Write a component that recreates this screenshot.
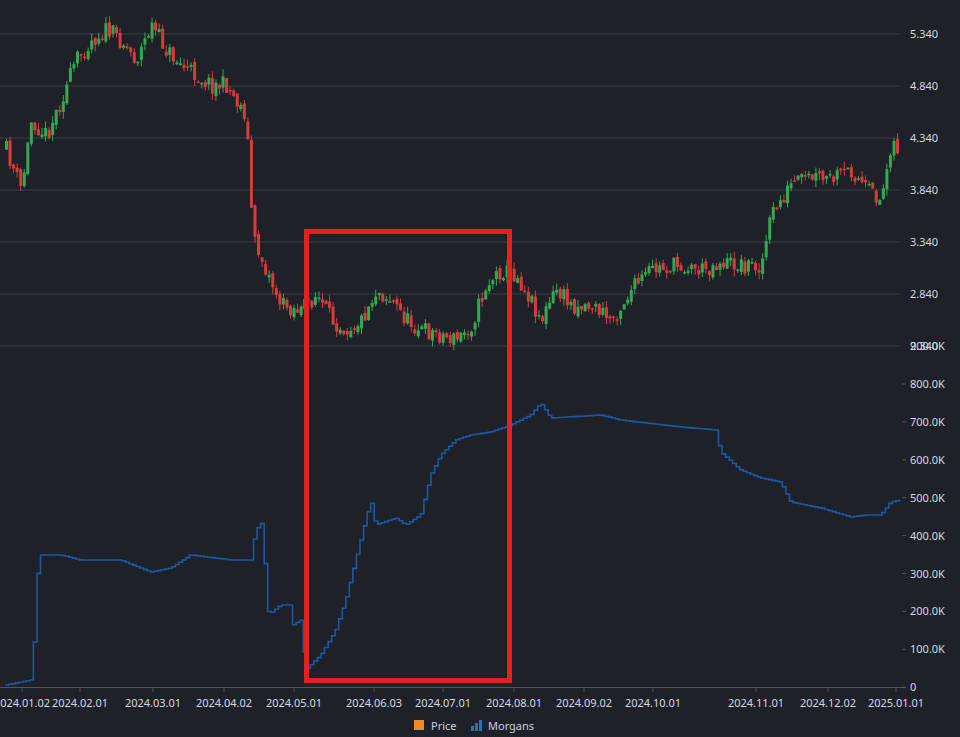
import React from "react";

const pricePts: [number, number][] = [[5,150],[20,190],[30,120],[45,135],[60,100],[75,60],[90,40],[105,30],[120,40],[135,60],[150,25],[165,50],[180,65],[195,75],[210,85],[225,85],[245,115],[248,175],[252,240],[265,270],[280,305],[300,310],[315,295],[330,320],[345,328],[360,320],[375,290],[390,300],[405,320],[420,330],[440,335],[455,340],[470,325],[485,285],[500,270],[515,275],[530,300],[540,320],[555,290],[570,305],[590,305],[610,320],[630,290],[650,270],[680,265],[700,270],[720,262],[740,265],[760,265],[770,215],[790,185],[810,178],[830,180],[850,170],[865,190],[880,200],[890,140],[897,150]];

const volPts: [number, number][] = [[5,685],[30,680],[33,650],[36,590],[38,555],[60,555],[80,560],[120,560],[150,572],[170,568],[190,555],[230,560],[250,560],[255,530],[262,522],[265,580],[268,615],[280,605],[290,605],[292,625],[300,620],[305,670],[320,655],[335,630],[345,600],[355,560],[365,520],[370,500],[375,525],[395,518],[405,525],[420,515],[430,475],[440,455],[455,440],[470,435],[490,432],[510,425],[530,415],[540,403],[550,418],[600,415],[620,420],[680,427],[715,430],[720,452],[740,470],[760,478],[780,482],[790,502],[820,508],[850,517],[865,515],[880,515],[890,502],[900,500]];

function interp(pts: [number, number][], x: number) {
  for (let i = 0; i < pts.length - 1; i++) {
    const [x0, y0] = pts[i], [x1, y1] = pts[i + 1];
    if (x >= x0 && x <= x1) return y0 + ((y1 - y0) * (x - x0)) / (x1 - x0 || 1);
  }
  return pts[pts.length - 1][1];
}

let seed = 11;
function rnd() { seed = (seed * 16807) % 2147483647; return seed / 2147483647; }

const candles: { x: number; o: number; c: number; h: number; l: number }[] = [];
let prev = interp(pricePts, 5);
for (let x = 5; x <= 897; x += 3.55) {
  const target = interp(pricePts, x) + (rnd() - 0.5) * 18;
  const o = prev + (rnd() - 0.5) * 6;
  const c = target;
  const h = Math.min(o, c) - rnd() * 7;
  const l = Math.max(o, c) + rnd() * 7;
  candles.push({ x, o, c, h, l });
  prev = c;
}

let volPath = `M5 ${interp(volPts, 5)}`;
for (let x = 5; x <= 900; x += 3.55) {
  volPath += ` H${x.toFixed(1)} V${interp(volPts, x).toFixed(1)}`;
}
volPath += " H900";

const priceLabels = ["5.340", "4.840", "4.340", "3.840", "3.340", "2.840", "2.340"];
const volLabels = ["800.0K", "700.0K", "600.0K", "500.0K", "400.0K", "300.0K", "200.0K", "100.0K", "0"];
const xLabels: [number, string][] = [[22,"2024.01.02"],[80,"2024.02.01"],[153,"2024.03.01"],[224,"2024.04.02"],[294,"2024.05.01"],[374,"2024.06.03"],[443,"2024.07.01"],[514,"2024.08.01"],[584,"2024.09.02"],[653,"2024.10.01"],[756,"2024.11.01"],[828,"2024.12.02"],[896,"2025.01.01"]];

export default function App() {
  return (
    <div className="w-[960px] h-[737px] bg-[#1f2128] overflow-hidden font-['Noto_Sans',sans-serif]">
      <svg width="960" height="737" viewBox="0 0 960 737">
        {priceLabels.map((t, i) => {
          const y = 34 + i * 52;
          return (
            <g key={t}>
              <line x1="0" x2="900" y1={y} y2={y} stroke="#3a3d45" strokeWidth="1" />
              <text x="910" y={y + 4} fill="#d4d8e0" fontSize="11">{t}</text>
            </g>
          );
        })}
        <text x="910" y="350" fill="#d4d8e0" fontSize="11">900.0K</text>
        {volLabels.map((t, i) => {
          const y = 384 + i * 37.9;
          return (
            <g key={t}>
              <line x1="902" x2="906" y1={y} y2={y} stroke="#555" />
              <text x="910" y={y + 4} fill="#d4d8e0" fontSize="11">{t}</text>
            </g>
          );
        })}
        <line x1="0" x2="905" y1="687.5" y2="687.5" stroke="#555" />
        {xLabels.map(([x, t]) => (
          <g key={t}>
            <line x1={x} x2={x} y1="688" y2="692" stroke="#555" />
            <text x={x} y="707" fill="#d4d8e0" fontSize="11" textAnchor="middle">{t}</text>
          </g>
        ))}
        {candles.map((c, i) => {
          const up = c.c < c.o;
          const col = up ? "#35a853" : "#d93a3a";
          const top = Math.min(c.o, c.c);
          const hgt = Math.max(1.5, Math.abs(c.o - c.c));
          return (
            <g key={i}>
              <line x1={c.x + 1.5} x2={c.x + 1.5} y1={c.h} y2={c.l} stroke={col} strokeWidth="1" />
              <rect x={c.x} y={top} width="3" height={hgt} fill={col} />
            </g>
          );
        })}
        <path d={volPath} fill="none" stroke="#1c57a5" strokeWidth="1.6" />
        <rect x="306.5" y="231.5" width="203" height="449" fill="none" stroke="#e3211f" strokeWidth="5" />
        <rect x="414" y="720" width="10" height="10" fill="#f08a24" />
        <text x="431" y="730" fill="#c8d0e0" fontSize="11">Price</text>
        <g fill="#2f6fbf">
          <rect x="471" y="726" width="3" height="5" />
          <rect x="475" y="723" width="3" height="8" />
          <rect x="479" y="720" width="3" height="11" />
        </g>
        <text x="488" y="730" fill="#c8d0e0" fontSize="11">Morgans</text>
      </svg>
    </div>
  );
}
